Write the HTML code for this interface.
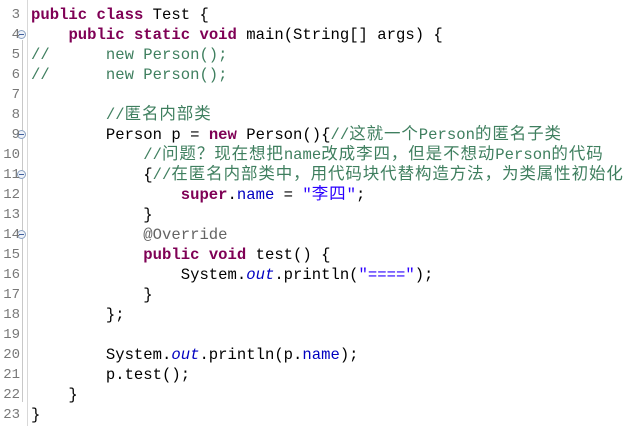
<!DOCTYPE html>
<html><head><meta charset="utf-8"><style>
body{margin:0;width:635px;height:426px;background:#fff;overflow:hidden;position:relative;font-family:"Liberation Mono","Noto Sans CJK SC",monospace;}
.g{position:absolute;left:0;top:5px;width:20px;}
.g div{height:20px;line-height:20px;text-align:right;font-size:14px;color:#787878;font-family:"Liberation Mono",monospace;}
.vl{position:absolute;left:27px;top:0;width:1px;height:426px;background:#d8d8d8;}
.fl{position:absolute;left:22px;top:40px;width:1px;height:362px;background:#c8c8c8;}
.fi{position:absolute;left:17px;width:9px;height:9px;border:1px solid #8aa0c0;border-radius:50%;background:#eef2f8;box-sizing:border-box;}
.fi:after{content:"";position:absolute;left:1px;top:3px;width:5px;height:1px;background:#4060a0;}
.c{position:absolute;left:31px;top:5px;}
.c div{height:20px;line-height:20px;font-size:15.6px;white-space:pre;color:#000;overflow:visible;}
.k{color:#7f0055;font-weight:bold}
.m{color:#3f7f5f}
.cj{font-family:"Noto Sans CJK SC",sans-serif;font-size:16.5px;letter-spacing:0.9px;line-height:0}
.s{color:#2a00ff}
.f{color:#0000c0}
.o{color:#0000c0;font-style:italic}
.a{color:#646464}
</style></head><body>
<div class="vl"></div><div class="fl"></div>
<div class="fi" style="top:30px"></div>
<div class="fi" style="top:130px"></div>
<div class="fi" style="top:170px"></div>
<div class="fi" style="top:230px"></div>
<div class="g"><div>3</div><div>4</div><div>5</div><div>6</div><div>7</div><div>8</div><div>9</div><div>10</div><div>11</div><div>12</div><div>13</div><div>14</div><div>15</div><div>16</div><div>17</div><div>18</div><div>19</div><div>20</div><div>21</div><div>22</div><div>23</div></div>
<div class="c">
<div><span class="k">public</span> <span class="k">class</span> Test {</div>
<div>    <span class="k">public</span> <span class="k">static</span> <span class="k">void</span> main(String[] args) {</div>
<div><span class="m">//      new Person();</span></div>
<div><span class="m">//      new Person();</span></div>
<div> </div>
<div>        <span class="m">//<span class="cj">匿名内部类</span></span></div>
<div>        Person p = <span class="k">new</span> Person(){<span class="m">//<span class="cj">这就一个</span>Person<span class="cj">的匿名子类</span></span></div>
<div>            <span class="m">//<span class="cj">问题？现在想把</span>name<span class="cj">改成李四，但是不想动</span>Person<span class="cj">的代码</span></span></div>
<div>            {<span class="m">//<span class="cj">在匿名内部类中，用代码块代替构造方法，为类属性初始化</span></span></div>
<div>                <span class="k">super</span>.<span class="f">name</span> = <span class="s">"<span class="cj">李四</span>"</span>;</div>
<div>            }</div>
<div>            <span class="a">@Override</span></div>
<div>            <span class="k">public</span> <span class="k">void</span> test() {</div>
<div>                System.<span class="o">out</span>.println(<span class="s">"===="</span>);</div>
<div>            }</div>
<div>        };</div>
<div> </div>
<div>        System.<span class="o">out</span>.println(p.<span class="f">name</span>);</div>
<div>        p.test();</div>
<div>    }</div>
<div>}</div>
</div>
</body></html>
